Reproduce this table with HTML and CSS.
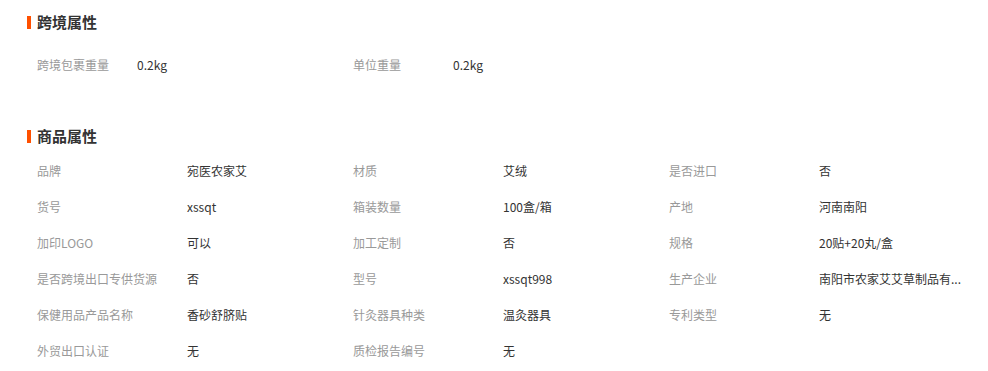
FILE: index.html
```html
<!DOCTYPE html>
<html lang="zh-CN">
<head>
<meta charset="utf-8">
<title>商品属性</title>
<link rel="stylesheet" href="styles.css">
</head>
<body>
<section class="block block-cross">
  <h3 class="block-title"><span class="bar"></span>跨境属性</h3>
  <div class="grid grid-cross">
    <div class="cell"><span class="label">跨境包裹重量</span><span class="value">0.2kg</span></div>
    <div class="cell"><span class="label">单位重量</span><span class="value">0.2kg</span></div>
  </div>
</section>
<section class="block block-goods">
  <h3 class="block-title"><span class="bar"></span>商品属性</h3>
  <div class="grid">
    <div class="cell"><span class="label">品牌</span><span class="value">宛医农家艾</span></div>
    <div class="cell"><span class="label">材质</span><span class="value">艾绒</span></div>
    <div class="cell"><span class="label">是否进口</span><span class="value">否</span></div>
    <div class="cell"><span class="label">货号</span><span class="value">xssqt</span></div>
    <div class="cell"><span class="label">箱装数量</span><span class="value">100盒/箱</span></div>
    <div class="cell"><span class="label">产地</span><span class="value">河南南阳</span></div>
    <div class="cell"><span class="label">加印LOGO</span><span class="value">可以</span></div>
    <div class="cell"><span class="label">加工定制</span><span class="value">否</span></div>
    <div class="cell"><span class="label">规格</span><span class="value">20贴+20丸/盒</span></div>
    <div class="cell"><span class="label">是否跨境出口专供货源</span><span class="value">否</span></div>
    <div class="cell"><span class="label">型号</span><span class="value">xssqt998</span></div>
    <div class="cell"><span class="label">生产企业</span><span class="value">南阳市农家艾艾草制品有...</span></div>
    <div class="cell"><span class="label">保健用品产品名称</span><span class="value">香砂舒脐贴</span></div>
    <div class="cell"><span class="label">针灸器具种类</span><span class="value">温灸器具</span></div>
    <div class="cell"><span class="label">专利类型</span><span class="value">无</span></div>
    <div class="cell"><span class="label">外贸出口认证</span><span class="value">无</span></div>
    <div class="cell"><span class="label">质检报告编号</span><span class="value">无</span></div>
  </div>
</section>
</body>
</html>
```
FILE: styles.css
```css
* { box-sizing: border-box; }
html, body { margin: 0; padding: 0; background: #fff; }
body {
  font-family: "Noto Sans CJK SC", "Liberation Sans", sans-serif;
  font-size: 12px;
  color: #333;
  width: 988px;
}
.block { padding-left: 27px; }
.block-cross { padding-top: 12px; }
.block-goods { padding-top: 44px; }
.block-title {
  margin: 0;
  display: flex;
  align-items: center;
  height: 20px;
  font-size: 15px;
  font-weight: bold;
  color: #333;
  line-height: 20px;
}
.bar {
  width: 4px;
  height: 13px;
  background: #ff5000;
  margin-right: 6px;
}
.grid {
  display: grid;
  grid-template-columns: repeat(3, 316px);
  padding-left: 10px;
}
.block-cross .grid { margin-top: 14px; }
.block-goods .grid { margin-top: 6px; }
.cell {
  display: flex;
  align-items: center;
  height: 36px;
  white-space: nowrap;
}
.label {
  width: 150px;
  flex: none;
  color: #999;
}
.grid-cross .label { width: 100px; }
.value {
  color: #333;
}
```
